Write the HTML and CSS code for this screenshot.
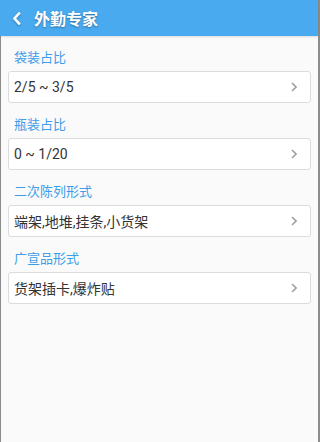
FILE: index.html
```html
<!DOCTYPE html>
<html lang="zh-CN">
<head>
<meta charset="utf-8">
<title>外勤专家</title>
<link rel="stylesheet" href="styles.css">
</head>
<body>
<div class="app">
  <header class="topbar">
    <svg class="back" width="9" height="13" viewBox="0 0 9 13"><polyline points="7,1.5 2.5,6.5 7,11.5" fill="none" stroke="#fff" stroke-width="2.6" stroke-linecap="square"/></svg>
    <h1 class="title">外勤专家</h1>
  </header>
  <main class="content">
    <section class="field">
      <div class="label">袋装占比</div>
      <div class="select"><span class="value">2/5 ~ 3/5</span><svg class="chev" width="6" height="10" viewBox="0 0 6 10"><polyline points="1,1 5,5 1,9" fill="none" stroke="#a0a0a0" stroke-width="1.6"/></svg></div>
    </section>
    <section class="field">
      <div class="label">瓶装占比</div>
      <div class="select"><span class="value">0 ~ 1/20</span><svg class="chev" width="6" height="10" viewBox="0 0 6 10"><polyline points="1,1 5,5 1,9" fill="none" stroke="#a0a0a0" stroke-width="1.6"/></svg></div>
    </section>
    <section class="field">
      <div class="label">二次陈列形式</div>
      <div class="select"><span class="value">端架,地堆,挂条,小货架</span><svg class="chev" width="6" height="10" viewBox="0 0 6 10"><polyline points="1,1 5,5 1,9" fill="none" stroke="#a0a0a0" stroke-width="1.6"/></svg></div>
    </section>
    <section class="field">
      <div class="label">广宣品形式</div>
      <div class="select"><span class="value">货架插卡,爆炸贴</span><svg class="chev" width="6" height="10" viewBox="0 0 6 10"><polyline points="1,1 5,5 1,9" fill="none" stroke="#a0a0a0" stroke-width="1.6"/></svg></div>
    </section>
  </main>
</div>
</body>
</html>
```
FILE: styles.css
```css
html, body {
  margin: 0;
  padding: 0;
  height: 100%;
}
body {
  font-family: Roboto, "Noto Sans CJK SC", sans-serif;
  background: #fafafa;
}
.app {
  height: 100vh;
  display: flex;
  flex-direction: column;
  border-right: 2px solid #8c8c8c;
  box-sizing: border-box;
}
.topbar {
  height: 36px;
  flex: none;
  background: #49aaf0;
  display: flex;
  align-items: center;
  padding-left: 12px;
  gap: 13px;
  box-shadow: 0 1px 2px rgba(0,0,0,0.12);
  position: relative;
  z-index: 1;
}
.back {
  display: block;
  filter: drop-shadow(0 1px 1px rgba(0,0,0,0.3));
}
.title {
  margin: 0;
  font-size: 16px;
  font-weight: bold;
  color: #fff;
  text-shadow: 0 1px 2px rgba(0,0,0,0.35);
}
.content {
  flex: 1;
  border-left: 1px solid #8c8c8c;
  padding: 12px 7px 0 7px;
}
.field {
  margin-bottom: 12px;
}
.label {
  font-size: 13px;
  line-height: 20px;
  height: 20px;
  color: #3d9de8;
  padding-left: 6px;
  margin-bottom: 3px;
}
.select {
  height: 32px;
  box-sizing: border-box;
  background: #fff;
  border: 1px solid #dcdcdc;
  border-radius: 3px;
  display: flex;
  align-items: center;
  justify-content: space-between;
  padding: 0 13px 0 5px;
}
.value {
  font-size: 14px;
  color: #333;
}
.chev {
  display: block;
}
```
